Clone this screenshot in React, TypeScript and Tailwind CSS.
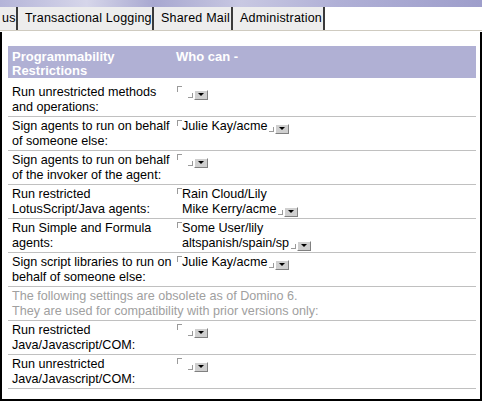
import React from 'react';

type Row = {
  label: [string, string];
  values: string[];
};

const rows: Row[] = [
  { label: ['Run unrestricted methods', 'and operations:'], values: [] },
  { label: ['Sign agents to run on behalf', 'of someone else:'], values: ['Julie Kay/acme'] },
  { label: ['Sign agents to run on behalf', 'of the invoker of the agent:'], values: [] },
  { label: ['Run restricted', 'LotusScript/Java agents:'], values: ['Rain Cloud/Lily', 'Mike Kerry/acme'] },
  { label: ['Run Simple and Formula', 'agents:'], values: ['Some User/lily', 'altspanish/spain/sp'] },
  { label: ['Sign script libraries to run on', 'behalf of someone else:'], values: ['Julie Kay/acme'] },
];

const legacyRows: Row[] = [
  { label: ['Run restricted', 'Java/Javascript/COM:'], values: [] },
  { label: ['Run unrestricted', 'Java/Javascript/COM:'], values: [] },
];

const tabs = [
  { name: 'us', w: 'w-[18px]', pad: 'pl-[2px]' },
  { name: 'Transactional Logging', w: 'w-[136px]', pad: 'pl-[7px]' },
  { name: 'Shared Mail', w: 'w-[79px]', pad: 'pl-[7px]' },
  { name: 'Administration', w: 'w-[92px]', pad: 'pl-[7px]' },
];

// Champ Notes : crochets de délimitation + bouton de liste.
function NamesField({ values }: { values: string[] }) {
  const lines = values.length ? values : [''];
  return (
    <div className="relative pl-[10px]">
      <span className="absolute left-[5px] top-[1px] h-[6px] w-[5px] border-l border-t border-[#9a9a9a]" />
      {lines.map((v, i) => (
        <div key={i} className="flex h-[15px] items-center whitespace-nowrap">
          <span>{v}</span>
          {i === lines.length - 1 ? (
            <>
              <span
                className={`mt-[6px] h-[5px] w-[5px] border-b border-r border-[#9a9a9a] ${
                  v ? 'ml-[2px]' : 'ml-[6px]'
                }`}
              />
              <span className="ml-[1px] mt-[4px] flex h-[10px] w-[14px] items-center justify-center border border-b-[#808080] border-l-white border-r-[#808080] border-t-white bg-[#cfcfcf]">
                <span className="h-0 w-0 border-l-[3px] border-r-[3px] border-t-[3px] border-l-transparent border-r-transparent border-t-black" />
              </span>
            </>
          ) : null}
        </div>
      ))}
    </div>
  );
}

function RowView({ row }: { row: Row }) {
  return (
    <div className="grid grid-cols-[164px_1fr] border-b border-[#c0c0c0] pb-[1px] pt-[2px]">
      <div className="pl-[4px] leading-[15px]">
        <div className="whitespace-nowrap">{row.label[0]}</div>
        <div className="whitespace-nowrap">{row.label[1]}</div>
      </div>
      <NamesField values={row.values} />
    </div>
  );
}

export default function App() {
  return (
    <div
      className="relative h-[401px] w-[482px] overflow-hidden bg-white text-[12.6px] text-black"
      style={{ fontFamily: '"Liberation Sans", Arial, sans-serif' }}
    >
      <div className="h-[7px] bg-[linear-gradient(90deg,#b4b4d8_0%,#d6d6ea_18%,#a8a8d0_32%,#c8c8e2_50%,#b0b0d6_70%,#9e9ecb_100%)]" />

      <div className="flex h-[23px] items-stretch bg-white">
        {tabs.map((t) => (
          <div
            key={t.name}
            className={`${t.w} ${t.pad} flex items-center overflow-hidden whitespace-nowrap border-r-2 border-[#3a3a3a] bg-[#ededed] text-[12.5px] tracking-[0.2px]`}
          >
            {t.name}
          </div>
        ))}
      </div>
      <div className="h-[2px] border-t border-[#cfcbc0] bg-white" />

      <div className="h-[369px] border-b-2 border-l-2 border-r-2 border-black pt-[14px]">
        <div className="ml-[6px] w-[468px]">
          <div className="grid h-[32px] grid-cols-[164px_1fr] bg-[#b0b0d4] pt-[4px] text-[13px] font-bold leading-[14px] text-white">
            <div className="pl-[4px]">
              <div>Programmability</div>
              <div>Restrictions</div>
            </div>
            <div className="pl-[4px]">Who can -</div>
          </div>

          <div className="mt-[5px]">
            {rows.map((r) => (
              <RowView key={r.label.join(' ')} row={r} />
            ))}
            <div className="border-b border-[#c0c0c0] pb-[1px] pl-[4px] pt-[2px] leading-[15px] text-[#a0a0a0]">
              <div>The following settings are obsolete as of Domino 6.</div>
              <div>They are used for compatibility with prior versions only:</div>
            </div>
            {legacyRows.map((r, i) => (
              <RowView key={i} row={r} />
            ))}
          </div>
        </div>
      </div>
    </div>
  );
}
